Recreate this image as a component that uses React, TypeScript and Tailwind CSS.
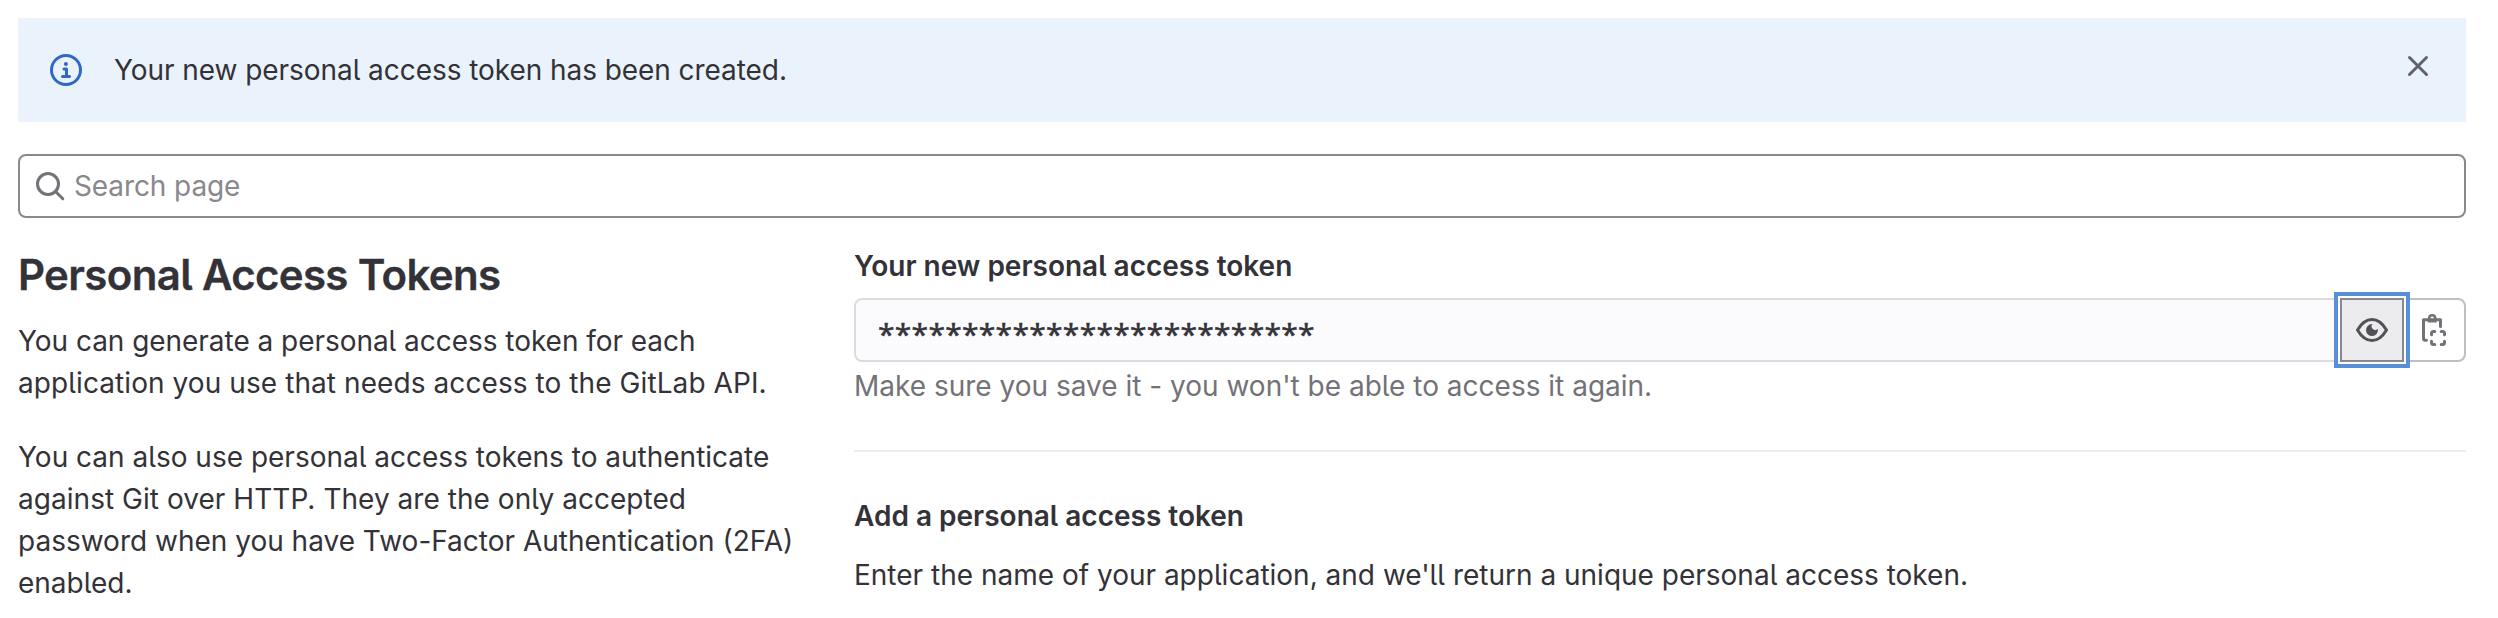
import type { ReactNode } from "react";

function Icon({ className, children }: { className?: string; children: ReactNode }) {
  return (
    <svg
      viewBox="0 0 16 16"
      className={`size-8 shrink-0 ${className ?? ""}`}
      fill="none"
      stroke="currentColor"
      strokeWidth="1.5"
      strokeLinecap="round"
      strokeLinejoin="round"
      aria-hidden="true"
    >
      {children}
    </svg>
  );
}

function InfoIcon() {
  return (
    <Icon className="text-[#2f68c5]">
      <circle cx="8" cy="8" r="7.25" />
      <circle cx="7.95" cy="5" r="1" fill="currentColor" stroke="none" />
      <path d="M7 7.5H8.25V11.25M6.25 11.25H9.75" />
    </Icon>
  );
}

function CloseIcon() {
  return (
    <Icon className="text-[#626168]">
      <path d="M3.75 3.75L12.25 12.25M12.25 3.75L3.75 12.25" />
    </Icon>
  );
}

function SearchIcon() {
  return (
    <Icon className="text-[#737278]">
      <circle cx="7" cy="7" r="5.25" />
      <path d="M10.9 10.9L14.4 14.4" />
    </Icon>
  );
}

function EyeIcon() {
  return (
    <Icon className="text-[#535158]">
      <path d="M0.75 8C2.5 5 5 2.75 8 2.75S13.5 5 15.25 8C13.5 11 11 13.25 8 13.25S2.5 11 0.75 8Z" />
      <path
        d="M8 5a3 3 0 1 0 2.94 2.4A1.6 1.6 0 1 1 8.3 5.02A3 3 0 0 0 8 5Z"
        fill="currentColor"
        stroke="none"
      />
    </Icon>
  );
}

function CopyIcon() {
  return (
    <Icon className="text-[#737278]">
      <path d="M4.2 13.1H3.75a1 1 0 0 1-1-1V2.85H11.25V6.2" />
      <path
        fillRule="evenodd"
        d="M4.9 2.1A2.2 2.2 0 0 1 9.3 2.1V4.2H4.9ZM7.1 1.2A0.9 0.9 0 1 0 7.1 3A0.9 0.9 0 1 0 7.1 1.2Z"
        fill="currentColor"
        stroke="none"
      />
      <path d="M6.75 10.4V9.75a1 1 0 0 1 1-1H8.4M11.6 8.75H12.25a1 1 0 0 1 1 1V10.4M13.25 13.6V14.25a1 1 0 0 1-1 1H11.6M8.4 15.25H7.75a1 1 0 0 1-1-1V13.6" />
    </Icon>
  );
}

export default function App() {
  return (
    <div className="h-[618px] overflow-hidden bg-white pt-[18px] pr-8 pl-[18px] font-['Inter',sans-serif] text-[28px] leading-[42px] text-[#333238] [font-feature-settings:'cv05']">
      <div className="flex h-[104px] items-start bg-[#eaf3fb] pr-8 pl-8">
        <div className="pt-9">
          <InfoIcon />
        </div>
        <p className="flex-1 pt-[31px] pl-8 tracking-[-0.06px]">Your new personal access token has been created.</p>
        <button type="button" aria-label="Dismiss" className="pt-8">
          <CloseIcon />
        </button>
      </div>

      <div className="mt-8 flex h-16 items-center rounded-lg border-2 border-[#89888d] pl-3.5">
        <SearchIcon />
        <span className="pl-2 text-[#89888d] tracking-[-0.1px]">Search page</span>
      </div>

      <div className="flex">
        <section className="w-[836px] shrink-0 pt-[31px]">
          <h4 className="text-[42px] leading-[51px] font-semibold tracking-[-0.66px] [-webkit-text-stroke:0.3px]">
            Personal Access Tokens
          </h4>
          <p className="mt-5">
            <span className="tracking-[-0.04px]">You can generate a personal access token for each</span>
            <br />
            <span className="tracking-[0.08px]">application you use that needs access to the GitLab API.</span>
          </p>
          <p className="mt-8">
            You can also use personal access tokens to authenticate
            <br />
            <span className="tracking-[0.04px]">against Git over HTTP. They are the only accepted</span>
            <br />
            password when you have Two-Factor Authentication (2FA)
            <br />
            enabled.
          </p>
        </section>

        <section className="flex-1 pt-[27px]">
          <h5 className="font-semibold">Your new personal access token</h5>
          <div className="mt-[11px] flex h-16">
            <div className="flex-1 rounded-l-lg border-2 border-r-0 border-[#dcdcde] bg-[#fbfafd] pt-[13px] pl-[22px] font-['Open_Sans',sans-serif] text-[30px] leading-[42px] font-medium tracking-[0.28px] [-webkit-text-stroke:0.6px]">
              **************************
            </div>
            <button
              type="button"
              aria-label="Reveal token"
              className="z-10 flex size-16 items-center justify-center border-2 border-[#89888d] bg-[#ececef] shadow-[0_0_0_2px_#fff,0_0_0_6px_#588fd9]"
            >
              <EyeIcon />
            </button>
            <button
              type="button"
              aria-label="Copy token"
              className="-ml-0.5 flex size-16 items-center justify-center rounded-r-lg border-2 border-[#bfbfc3] bg-white"
            >
              <CopyIcon />
            </button>
          </div>
          <p className="mt-[3px] text-[#737278]">Make sure you save it - you won't be able to access it again.</p>
          <hr className="mt-[43px] border-t-2 border-[#ececef]" />
          <h5 className="mt-[43px] font-semibold">Add a personal access token</h5>
          <p className="mt-[17px]">
            Enter the name of your application, and we'll return a unique personal access token.
          </p>
        </section>
      </div>
    </div>
  );
}
